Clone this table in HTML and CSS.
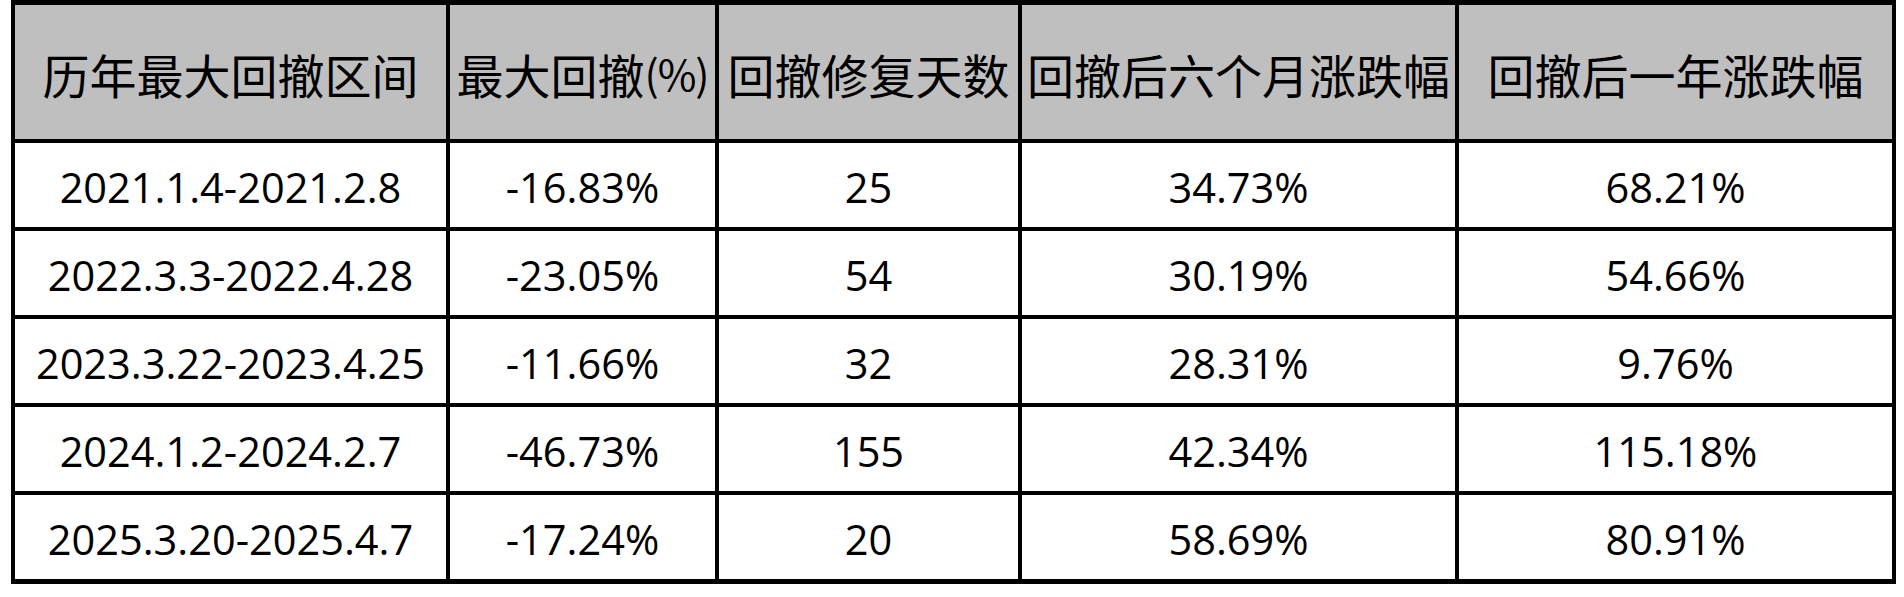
FILE: index.html
```html
<!DOCTYPE html>
<html lang="zh-CN">
<head>
<meta charset="utf-8">
<title>历年最大回撤区间</title>
<link rel="stylesheet" href="styles.css">
</head>
<body>
<div class="sheet" role="table">
  <div class="cell head" role="columnheader">历年最大回撤区间</div>
  <div class="cell head" role="columnheader">最大回撤<span class="pct">(%)</span></div>
  <div class="cell head" role="columnheader">回撤修复天数</div>
  <div class="cell head" role="columnheader">回撤后六个月涨跌幅</div>
  <div class="cell head" role="columnheader">回撤后一年涨跌幅</div>

  <div class="cell" role="cell">2021.1.4-2021.2.8</div>
  <div class="cell" role="cell">-16.83%</div>
  <div class="cell" role="cell">25</div>
  <div class="cell" role="cell">34.73%</div>
  <div class="cell" role="cell">68.21%</div>

  <div class="cell" role="cell">2022.3.3-2022.4.28</div>
  <div class="cell" role="cell">-23.05%</div>
  <div class="cell" role="cell">54</div>
  <div class="cell" role="cell">30.19%</div>
  <div class="cell" role="cell">54.66%</div>

  <div class="cell" role="cell">2023.3.22-2023.4.25</div>
  <div class="cell" role="cell">-11.66%</div>
  <div class="cell" role="cell">32</div>
  <div class="cell" role="cell">28.31%</div>
  <div class="cell" role="cell">9.76%</div>

  <div class="cell" role="cell">2024.1.2-2024.2.7</div>
  <div class="cell" role="cell">-46.73%</div>
  <div class="cell" role="cell">155</div>
  <div class="cell" role="cell">42.34%</div>
  <div class="cell" role="cell">115.18%</div>

  <div class="cell" role="cell">2025.3.20-2025.4.7</div>
  <div class="cell" role="cell">-17.24%</div>
  <div class="cell" role="cell">20</div>
  <div class="cell" role="cell">58.69%</div>
  <div class="cell" role="cell">80.91%</div>
</div>
</body>
</html>
```

FILE: styles.css
```css
html, body {
  margin: 0;
  padding: 0;
  background: #ffffff;
}

.sheet {
  display: inline-grid;
  margin-left: 11px;
  grid-template-columns: 431px 265px 299px 433px 433px;
  grid-template-rows: 134px repeat(5, 84px);
  gap: 4px;
  padding: 5px 4px 5px 4px;
  background: #000000;
}

.cell {
  background: #ffffff;
  color: #000000;
  display: flex;
  align-items: center;
  justify-content: center;
  white-space: nowrap;
  font-family: "Open Sans", "Noto Sans", sans-serif;
  font-size: 41.5px;
  line-height: 1;
  padding-top: 6px;
  box-sizing: border-box;
}

.head {
  background: #bfbfbf;
  font-family: "Noto Sans CJK SC", "Noto Sans", sans-serif;
  font-size: 47px;
  font-weight: 400;
  padding-top: 2px;
}

.pct {
  font-size: 42px;
  letter-spacing: -1px;
}
```
